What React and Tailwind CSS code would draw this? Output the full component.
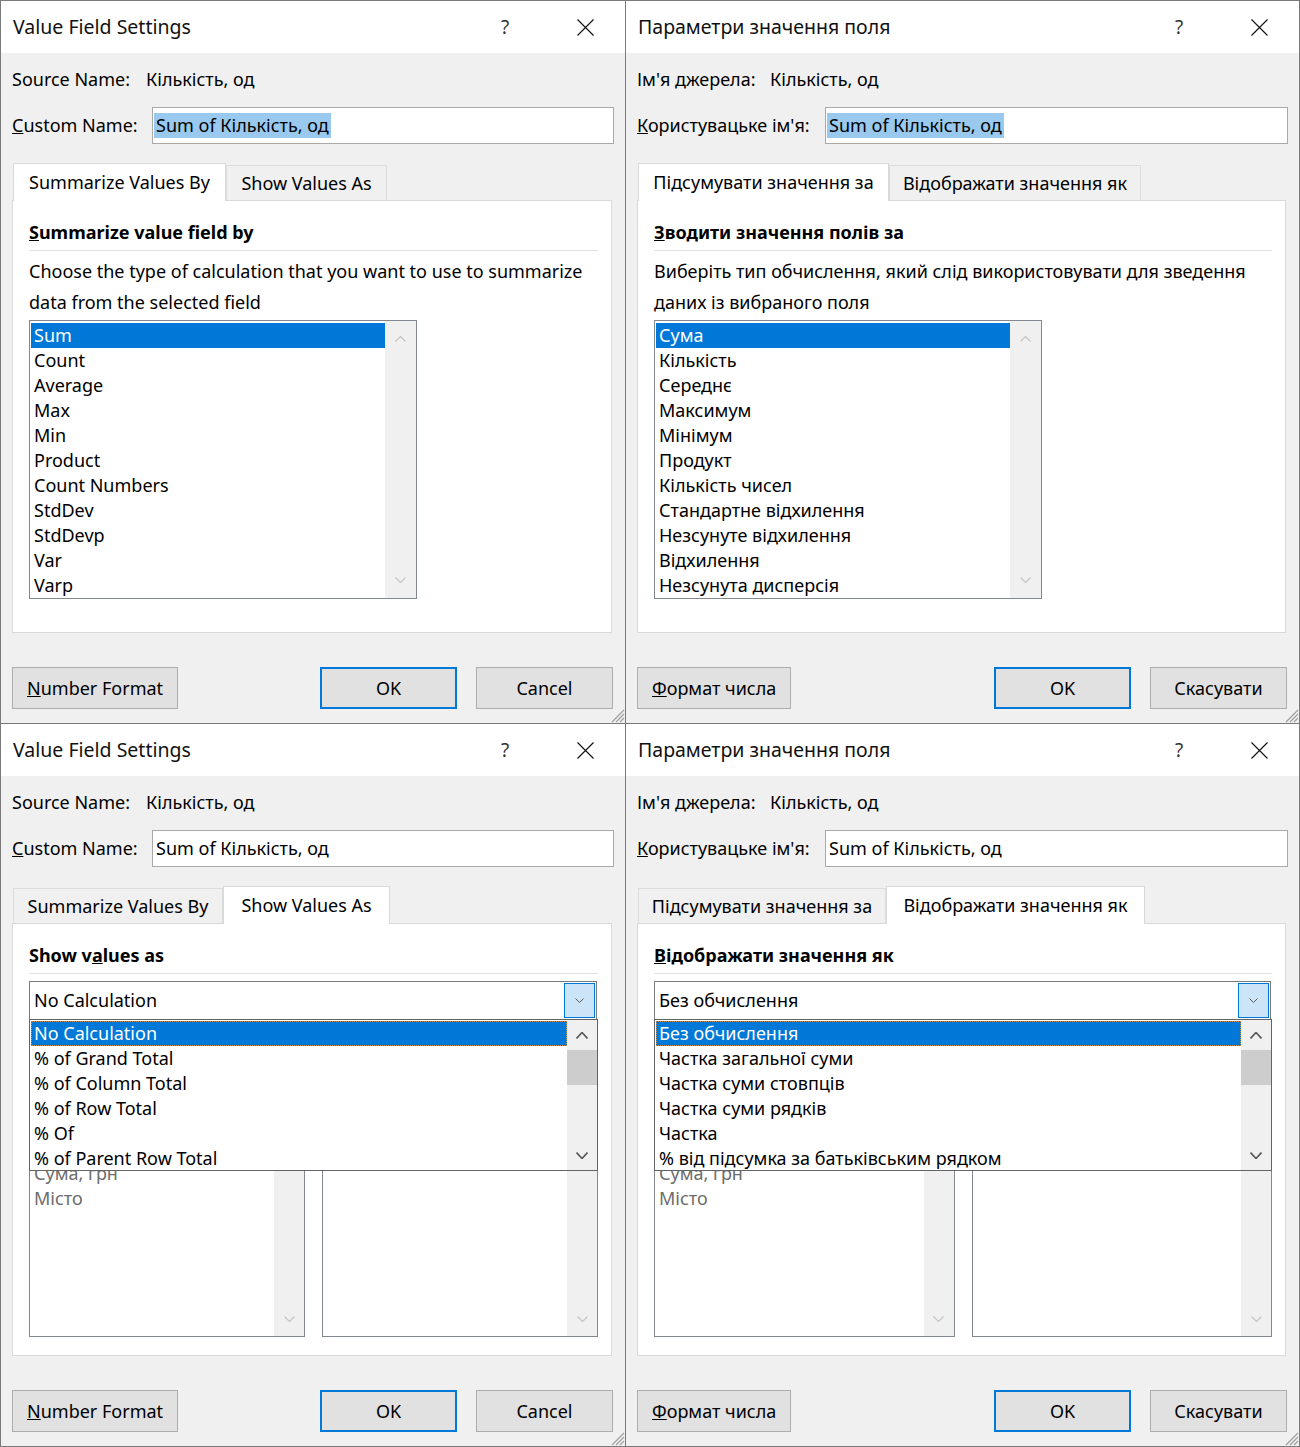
import React from 'react';

// Four Excel "Value Field Settings" dialogs (EN / UK, two tabs each)

const dialogs = [
  {
    key: 'tl',
    title: 'Value Field Settings',
    srcLabel: 'Source Name:',
    srcW: 'w-[134px]',
    customLabel: (<><span className="underline">C</span>ustom Name:</>),
    customW: 'w-[140px]',
    tabs: ['Summarize Values By', 'Show Values As'],
    tabW: ['w-[213px]', 'w-[161px]'],
    active: 0,
    selectedName: true,
    heading: (<><span className="underline">S</span>ummarize value field by</>),
    desc: ['Choose the type of calculation that you want to use to summarize', 'data from the selected field'],
    items: ['Sum', 'Count', 'Average', 'Max', 'Min', 'Product', 'Count Numbers', 'StdDev', 'StdDevp', 'Var', 'Varp'],
    numberFormat: (<><span className="underline">N</span>umber Format</>),
    cancel: 'Cancel',
  },
  {
    key: 'tr',
    title: 'Параметри значення поля',
    srcLabel: "Ім'я джерела:",
    srcW: 'w-[133px]',
    customLabel: (<><span className="underline">К</span>{"ористувацьке ім'я:"}</>),
    customW: 'w-[188px]',
    tabs: ['Підсумувати значення за', 'Відображати значення як'],
    tabW: ['w-[251px]', 'w-[252px]'],
    active: 0,
    selectedName: true,
    heading: (<><span className="underline">З</span>водити значення полів за</>),
    desc: ['Виберіть тип обчислення, який слід використовувати для зведення', 'даних із вибраного поля'],
    items: ['Сума', 'Кількість', 'Середнє', 'Максимум', 'Мінімум', 'Продукт', 'Кількість чисел', 'Стандартне відхилення', 'Незсунуте відхилення', 'Відхилення', 'Незсунута дисперсія'],
    numberFormat: (<><span className="underline">Ф</span>ормат числа</>),
    cancel: 'Скасувати',
  },
  {
    key: 'bl',
    title: 'Value Field Settings',
    srcLabel: 'Source Name:',
    srcW: 'w-[134px]',
    customLabel: (<><span className="underline">C</span>ustom Name:</>),
    customW: 'w-[140px]',
    tabs: ['Summarize Values By', 'Show Values As'],
    tabW: ['w-[210px]', 'w-[167px]'],
    active: 1,
    selectedName: false,
    heading: (<>Show v<span className="underline">a</span>lues as</>),
    combo: 'No Calculation',
    options: ['No Calculation', '% of Grand Total', '% of Column Total', '% of Row Total', '% Of', '% of Parent Row Total'],
    baseItems: ['Сума, грн', 'Місто'],
    numberFormat: (<><span className="underline">N</span>umber Format</>),
    cancel: 'Cancel',
  },
  {
    key: 'br',
    title: 'Параметри значення поля',
    srcLabel: "Ім'я джерела:",
    srcW: 'w-[133px]',
    customLabel: (<><span className="underline">К</span>{"ористувацьке ім'я:"}</>),
    customW: 'w-[188px]',
    tabs: ['Підсумувати значення за', 'Відображати значення як'],
    tabW: ['w-[248px]', 'w-[259px]'],
    active: 1,
    selectedName: false,
    heading: (<><span className="underline">В</span>ідображати значення як</>),
    combo: 'Без обчислення',
    options: ['Без обчислення', 'Частка загальної суми', 'Частка суми стовпців', 'Частка суми рядків', 'Частка', '% від підсумка за батьківським рядком'],
    baseItems: ['Сума, грн', 'Місто'],
    numberFormat: (<><span className="underline">Ф</span>ормат числа</>),
    cancel: 'Скасувати',
  },
];

function Chevron({ dir = 'down', w = 11, h = 6, stroke = 1.2 }) {
  const d = dir === 'down'
    ? `M0.5 0.5 L${w / 2} ${h - 0.5} L${w - 0.5} 0.5`
    : `M0.5 ${h - 0.5} L${w / 2} 0.5 L${w - 0.5} ${h - 0.5}`;
  return (
    <svg width={w} height={h} viewBox={`0 0 ${w} ${h}`} className="block">
      <path d={d} fill="none" stroke="currentColor" strokeWidth={stroke} />
    </svg>
  );
}

function CloseIcon() {
  return (
    <svg width="17" height="17" viewBox="0 0 17 17" className="block">
      <path d="M0.5 0.5 L16.5 16.5 M16.5 0.5 L0.5 16.5" stroke="#111" strokeWidth="1.1" fill="none" />
    </svg>
  );
}

function Grip() {
  return (
    <svg width="16" height="16" viewBox="0 0 16 16" className="block">
      <path d="M15 3 L3 15 M15 7 L7 15 M15 11 L11 15" stroke="#a0a0a0" strokeWidth="1.2" fill="none" />
    </svg>
  );
}

function SummarizeList({ items }) {
  return (
    <div className="mt-[2px] w-[388px] h-[279px] border border-[#828790] bg-white flex overflow-hidden">
      <div className="flex-1 pt-[2px] pl-[1px]">
        {items.map((it, i) => (
          <div
            key={it}
            className={`h-[25px] leading-[25px] pl-[3px] whitespace-nowrap ${i === 0 ? 'bg-[#0078d7] text-white' : 'text-black'}`}
          >
            {it}
          </div>
        ))}
      </div>
      <div className="w-[31px] bg-[#f0f0f0] flex flex-col items-center justify-between py-[15px] text-[#c4c4c4]">
        <Chevron dir="up" />
        <Chevron />
      </div>
    </div>
  );
}

function ShowValuesAs({ d }) {
  return (
    <>
      <div className="relative mt-[7px]">
        <div className="h-[39px] mr-px border border-[#7a7a7a] bg-white flex p-px">
          <span className="flex-1 pl-[3px] flex items-center whitespace-nowrap">{d.combo}</span>
          <span className="w-[31px] border border-[#0078d7] bg-[#cce4f7] flex items-center justify-center text-[#5a5a5a]">
            <Chevron w={9} h={5} stroke={1} />
          </span>
        </div>

        {/* open dropdown list */}
        <div className="absolute left-0 right-0 top-[38px] h-[152px] border border-[#646464] bg-white flex z-20">
          <div className="flex-1 pt-px pl-px">
            {d.options.map((o, i) => (
              <div
                key={o}
                className={`h-[25px] leading-[24px] pl-[3px] whitespace-nowrap ${
                  i === 0
                    ? 'bg-[#0078d7] text-white outline-1 outline-dotted outline-[#d08a48] -outline-offset-1'
                    : 'text-black'
                }`}
              >
                {o}
              </div>
            ))}
          </div>
          <div className="w-[30px] bg-[#f0f0f0] flex flex-col text-[#555]">
            <div className="h-[30px] flex items-center justify-center">
              <Chevron dir="up" w={12} h={7} stroke={1.6} />
            </div>
            <div className="h-[35px] bg-[#cdcdcd]" />
            <div className="flex-1" />
            <div className="h-[26px] flex items-start justify-center pt-[8px]">
              <Chevron w={12} h={7} stroke={1.6} />
            </div>
          </div>
        </div>
      </div>

      {/* base field / base item lists, mostly covered by the open dropdown */}
      <div className="mt-[88px] h-[229px] flex gap-[17px]">
        <div className="flex-1 border border-[#828790] bg-white flex overflow-hidden">
          <div className="flex-1 pt-[52px] pl-[4px] text-[#6d6d6d]">
            {d.baseItems.map((it) => (
              <div key={it} className="h-[25px] leading-[25px] whitespace-nowrap">{it}</div>
            ))}
          </div>
          <div className="w-[30px] bg-[#f0f0f0] flex flex-col items-center justify-between py-[14px] text-[#c4c4c4]">
            <Chevron dir="up" />
            <Chevron />
          </div>
        </div>
        <div className="flex-1 border border-[#828790] bg-white flex overflow-hidden">
          <div className="flex-1" />
          <div className="w-[30px] bg-[#f0f0f0] flex flex-col items-center justify-between py-[14px] text-[#c4c4c4]">
            <Chevron dir="up" />
            <Chevron />
          </div>
        </div>
      </div>
    </>
  );
}

function Dialog({ d, className }) {
  return (
    <div className={`relative flex flex-col bg-[#f0f0f0] border-[#7a7a7a] ${className}`}>
      {/* title bar */}
      <div className="h-[52px] bg-white flex items-center pl-[12px]">
        <span className="text-[19.5px] text-[#111] whitespace-nowrap">{d.title}</span>
        <span className="ml-auto w-[80px] text-center text-[19px] text-[#333]">?</span>
        <span className="w-[80px] flex justify-center">
          <CloseIcon />
        </span>
      </div>

      <div className="flex flex-col px-[11px]">
        <div className="mt-[13px] h-[26px] flex items-center whitespace-nowrap">
          <span className={d.srcW}>{d.srcLabel}</span>
          <span>Кількість, од</span>
        </div>

        <div className="mt-[15px] flex items-center whitespace-nowrap">
          <span className={d.customW}>{d.customLabel}</span>
          <div className="flex-1 h-[37px] border border-[#a9a9a9] bg-white flex items-center pl-px">
            <span className={d.selectedName ? 'bg-[#99c9ef] px-[2px] leading-[25px]' : 'px-[2px]'}>
              Sum of Кількість, од
            </span>
          </div>
        </div>

        {/* tabs */}
        <div className="mt-[19px] h-[37px] flex items-end pl-px">
          {d.tabs.map((t, i) =>
            i === d.active ? (
              <div
                key={t}
                className={`${d.tabW[i]} relative z-10 -mb-px h-[38px] bg-white border border-b-0 border-[#d9d9d9] flex items-center justify-center whitespace-nowrap`}
              >
                {t}
              </div>
            ) : (
              <div
                key={t}
                className={`${d.tabW[i]} h-[35px] bg-[#f0f0f0] border border-b-0 border-[#dcdcdc] flex items-center justify-center whitespace-nowrap`}
              >
                {t}
              </div>
            )
          )}
        </div>

        {/* tab panel */}
        <div className="h-[433px] mr-[2px] bg-white border border-[#d9d9d9] pt-[19px] pl-[16px] pr-[13px] flex flex-col">
          <div className="h-[24px] leading-[24px] font-bold whitespace-nowrap">{d.heading}</div>
          <div className="mt-[6px] border-t border-[#e3e3e3]" />
          {d.active === 0 ? (
            <>
              <p className="mt-[5px] leading-[31px] whitespace-nowrap">
                {d.desc[0]}
                <br />
                {d.desc[1]}
              </p>
              <SummarizeList items={d.items} />
            </>
          ) : (
            <ShowValuesAs d={d} />
          )}
        </div>

        {/* buttons */}
        <div className="mt-[34px] h-[42px] flex mr-px">
          <button className="px-[14px] border border-[#adadad] bg-[#e1e1e1] whitespace-nowrap">{d.numberFormat}</button>
          <button className="ml-auto w-[137px] border-2 border-[#0078d7] bg-[#e1e1e1]">OK</button>
          <button className="ml-[19px] w-[137px] border border-[#adadad] bg-[#e1e1e1] whitespace-nowrap">{d.cancel}</button>
        </div>
      </div>

      <div className="absolute right-0 bottom-0">
        <Grip />
      </div>
    </div>
  );
}

export default function App() {
  return (
    <div className="w-[1300px] h-[1447px] bg-[#f0f0f0] font-['Noto_Sans',sans-serif] text-[18px] text-black">
      <div className="w-[1300px] h-[1447px] border border-[#7a7a7a] grid grid-cols-[625px_1fr] grid-rows-[723px_1fr]">
        <Dialog d={dialogs[0]} className="border-r border-b" />
        <Dialog d={dialogs[1]} className="border-b" />
        <Dialog d={dialogs[2]} className="border-r" />
        <Dialog d={dialogs[3]} className="" />
      </div>
    </div>
  );
}
